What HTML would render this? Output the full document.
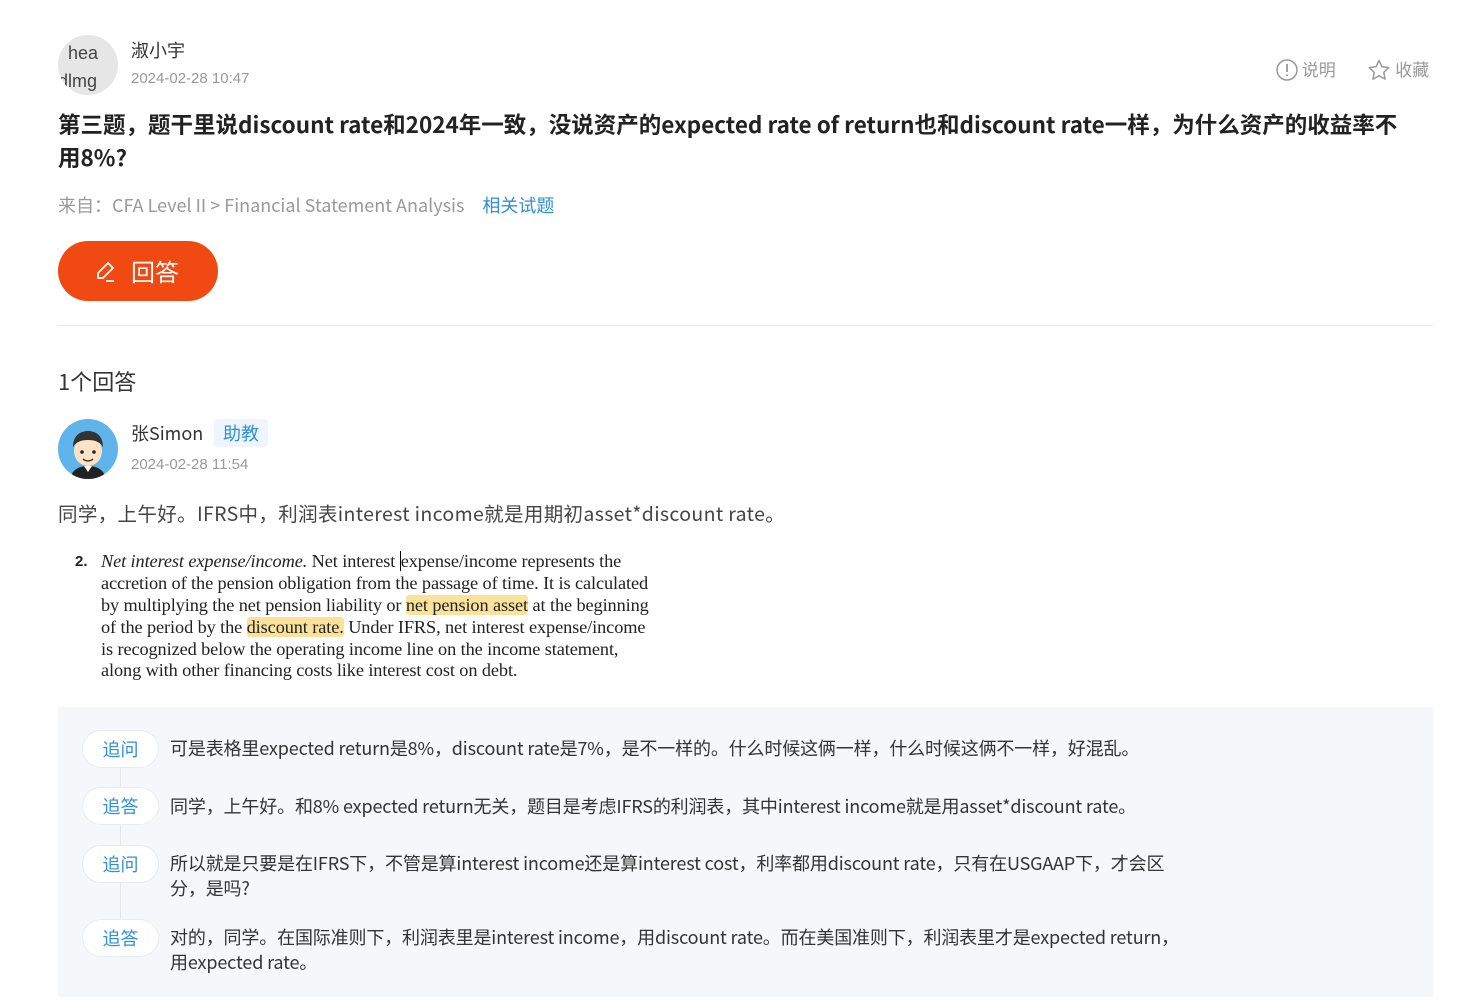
<!DOCTYPE html>
<html><head><meta charset="utf-8"><style>
*{margin:0;padding:0;box-sizing:border-box}
body{width:1471px;height:1007px;background:#fff;font-family:"Liberation Sans","Noto Sans CJK SC",sans-serif;color:#333;position:relative;overflow:hidden}
.a{position:absolute;white-space:nowrap}
.cj{font-family:"Noto Sans CJK SC","Liberation Sans",sans-serif}
.pill{position:absolute;left:82px;width:77px;height:38px;border:1px solid #e8ecf1;background:#fff;border-radius:19px;color:#2f8fd8;font-size:18px;text-align:center;line-height:36px}
.ser{font-family:"Liberation Serif",serif;font-size:18.3px;color:#222;left:101px;position:absolute;white-space:nowrap;letter-spacing:-0.1px}
.hl{background:#fbe29a;border-radius:3px}
.ft{position:absolute;left:170px;font-size:18px;color:#333;line-height:25px;letter-spacing:-0.15px}
</style></head><body>
<div class="a" style="left:58px;top:35px;width:60px;height:60px;border-radius:50%;background:#e6e6e6;overflow:hidden;font-size:18px;color:#444;line-height:28px;padding-top:4px;white-space:normal">&nbsp;&nbsp;hea<br>dlmg</div>
<div class="a cj" style="left:131px;top:37px;font-size:18px;color:#333">淑小宇</div>
<div class="a" style="left:131px;top:70px;font-size:15px;color:#999">2024-02-28 10:47</div>
<div class="a cj" style="left:1276px;top:56px;font-size:17px;color:#999">
<svg width="22" height="22" viewBox="0 0 22 22" style="vertical-align:-5px"><circle cx="11" cy="11" r="10" fill="none" stroke="#999" stroke-width="1.5"/><path d="M11 5v8M11 15.5v1.5" stroke="#999" stroke-width="1.8"/></svg> 说明
<span style="display:inline-block;width:24px"></span>
<svg width="24" height="22" viewBox="0 0 24 22" style="vertical-align:-5px"><path d="M12 1.5l3 6.3 6.8.8-5 4.7 1.3 6.8L12 16.8l-6.1 3.3 1.3-6.8-5-4.7 6.8-.8z" fill="none" stroke="#999" stroke-width="1.5" stroke-linejoin="round"/></svg> 收藏</div>
<div class="a cj" style="left:58px;top:108px;font-size:22.5px;font-weight:bold;color:#222;line-height:33px;white-space:normal;width:1356px">第三题，题干里说discount rate和2024年一致，没说资产的expected rate of return也和discount rate一样，为什么资产的收益率不用8%?</div>
<div class="a cj" style="left:58px;top:192px;font-size:18px;color:#999">来自：CFA Level II &gt; Financial Statement Analysis <span style="color:#2f8fd8;margin-left:14px">相关试题</span></div>
<div class="a" style="left:58px;top:241px;width:160px;height:60px;border-radius:30px;background:#f04a12;color:#fff;font-size:24px;line-height:60px" >
<svg width="24" height="24" viewBox="0 0 24 24" style="position:absolute;left:36px;top:19px"><path d="M14 3l5 5-10 10H4v-5z" fill="none" stroke="#fff" stroke-width="1.8" stroke-linejoin="round"/><path d="M12 21h8" stroke="#fff" stroke-width="1.8"/></svg>
<span class="cj" style="position:absolute;left:73px">回答</span></div>
<div class="a" style="left:58px;top:325px;width:1375px;height:1px;background:#e8e8e8"></div>
<div class="a cj" style="left:58px;top:365px;font-size:22px;color:#333">1个回答</div>
<div class="a" style="left:58px;top:419px;width:60px;height:60px;border-radius:50%;background:#5fb4ec;overflow:hidden">
<svg width="60" height="60" viewBox="0 0 60 60"><path d="M12 60c2-10 10-13 18-13s16 3 18 13z" fill="#222"/><path d="M26 47l4 6 4-6z" fill="#fff"/><ellipse cx="30" cy="32" rx="14" ry="15" fill="#fde3c4"/><path d="M15 28c0-12 8-16 15-16s15 4 15 16c-3-5-8-7-15-7s-12 2-15 7z" fill="#333"/><circle cx="24" cy="33" r="1.8" fill="#222"/><circle cx="36" cy="33" r="1.8" fill="#222"/><path d="M25 40q5 4 10 0" stroke="#333" fill="none" stroke-width="1.4"/></svg></div>
<div class="a cj" style="left:131px;top:420px;font-size:18px;color:#333">张Simon</div>
<div class="a cj" style="left:214px;top:419px;height:28px;padding:0 9px;background:#eef5fc;border-radius:4px;font-size:18px;color:#2f8fd8;line-height:28px">助教</div>
<div class="a" style="left:131px;top:456px;font-size:15px;color:#999">2024-02-28 11:54</div>
<div class="a cj" style="left:58px;top:498px;font-size:19.5px;color:#444;letter-spacing:0.35px">同学，上午好。IFRS中，利润表interest income就是用期初asset*discount rate。</div>
<div class="a" style="left:75px;top:553px;font-family:'Liberation Sans',sans-serif;font-weight:bold;font-size:15px;color:#222">2.</div>
<div class="ser" style="top:551px"><i>Net interest expense/income.</i> Net interest <span style="border-left:1px solid #000">expense/income represents the</span></div>
<div class="ser" style="top:573px">accretion of the pension obligation from the passage of time. It is calculated</div>
<div class="ser" style="top:595px">by multiplying the net pension liability or <span class="hl">net pension asset</span> at the beginning</div>
<div class="ser" style="top:617px">of the period by the <span class="hl">discount rate.</span> Under IFRS, net interest expense/income</div>
<div class="ser" style="top:639px">is recognized below the operating income line on the income statement,</div>
<div class="ser" style="top:660px">along with other financing costs like interest cost on debt.</div>
<div class="a" style="left:58px;top:707px;width:1375px;height:290px;background:#f5f7fa"></div>
<div class="a" style="left:120px;top:750px;width:1px;height:200px;background:#e3e7ec"></div>
<div class="pill cj" style="top:730px">追问</div>
<div class="ft cj" style="top:736px">可是表格里expected return是8%，discount rate是7%，是不一样的。什么时候这俩一样，什么时候这俩不一样，好混乱。</div>
<div class="pill cj" style="top:787px">追答</div>
<div class="ft cj" style="top:794px">同学，上午好。和8% expected return无关，题目是考虑IFRS的利润表，其中interest income就是用asset*discount rate。</div>
<div class="pill cj" style="top:845px">追问</div>
<div class="ft cj" style="top:851px">所以就是只要是在IFRS下，不管是算interest income还是算interest cost，利率都用discount rate，只有在USGAAP下，才会区<br>分，是吗?</div>
<div class="pill cj" style="top:919px">追答</div>
<div class="ft cj" style="top:925px">对的，同学。在国际准则下，利润表里是interest income，用discount rate。而在美国准则下，利润表里才是expected return，<br>用expected rate。</div>
</body></html>
